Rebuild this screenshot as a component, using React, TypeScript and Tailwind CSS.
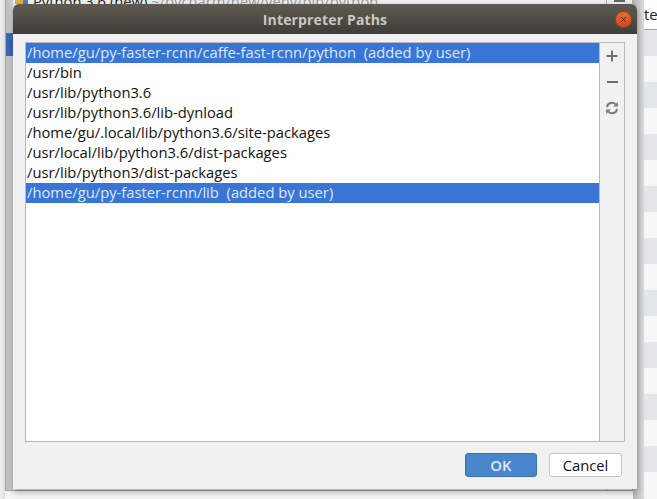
import React from 'react';
import { X } from 'lucide-react';

const PATHS = [
  { path: '/home/gu/py-faster-rcnn/caffe-fast-rcnn/python  (added by user)', selected: true },
  { path: '/usr/bin' },
  { path: '/usr/lib/python3.6' },
  { path: '/usr/lib/python3.6/lib-dynload' },
  { path: '/home/gu/.local/lib/python3.6/site-packages' },
  { path: '/usr/local/lib/python3.6/dist-packages' },
  { path: '/usr/lib/python3/dist-packages' },
  { path: '/home/gu/py-faster-rcnn/lib  (added by user)', selected: true },
];

const STRIPES = [0, 1, 2, 3, 4, 5, 6, 7, 8];

function RefreshIcon() {
  return (
    <svg width="14" height="14" viewBox="0 0 14 14" fill="none" stroke="#777" strokeWidth="2">
      <path d="M2 6.2A5 5 0 0 1 10.6 3.4" />
      <path d="M12 7.8A5 5 0 0 1 3.4 10.6" />
      <path d="M8.2 5.6h4.6V1z" fill="#777" stroke="none" />
      <path d="M5.8 8.4H1.2V13z" fill="#777" stroke="none" />
    </svg>
  );
}

function Backdrop() {
  return (
    <div className="flex h-[499px] bg-[#f5f5f5]">
      <div className="w-[5px] h-full bg-gradient-to-r from-[#f0f0f0] to-[#dedede]" />
      <div className="relative w-[628px] h-[491px] shrink-0 border-l border-b border-r border-[#a9a9a9] bg-[#eeeeee]">
        <div className="absolute left-0 top-0 w-[7px] h-full bg-gradient-to-r from-[#bdbdbd] to-[#d0d0d0]" />
        <div className="absolute left-0 top-[33px] w-[7px] h-[23px] bg-[#3a68b4]" />
        <div className="absolute left-[9px] top-0 w-[8px] h-[4px] bg-[#d9b23c]" />
        <div className="absolute left-[17px] top-0 w-[5px] h-[4px] bg-[#4a7fb0]" />
        <div className="absolute left-[27px] -top-[9px] text-[14.75px] leading-[20px] whitespace-nowrap text-[#222]">
          Python 3.6 (new) <span className="text-[#999]">~/pycharm/new/venv/bin/python</span>
        </div>
        <div className="absolute right-0 top-0 w-[26px] h-full border-l border-[#a9a9a9]" />
        <div className="absolute right-[7px] top-0 w-[11px] h-[2px] bg-[#666]" />
      </div>
      <div className="w-[11px] h-full bg-gradient-to-r from-[#b4b4b4] to-[#dcdcdc]" />
      <div className="flex-1 flex flex-col overflow-hidden">
        <div className="h-[30px] shrink-0 border-b border-[#9aa0a6] text-[15px] leading-[28px] whitespace-nowrap overflow-hidden text-[#222] bg-white">
          tes
        </div>
        {STRIPES.map((i) => (
          <div key={i} className="shrink-0">
            <div className="h-[26px] bg-[#e2e6ea]" />
            <div className="h-[26px] bg-[#f7f7f7]" />
          </div>
        ))}
      </div>
    </div>
  );
}

export default function App() {
  return (
    <div className="relative w-[657px] h-[499px] overflow-hidden font-['Open_Sans',sans-serif]">
      <Backdrop />

      <div className="absolute left-[13px] top-[4px] w-[624px] h-[485px] flex flex-col rounded-t-[6px] bg-[#f1f1f1] shadow-[0_3px_6px_rgba(0,0,0,0.3)]">
        <div className="relative h-[30px] shrink-0 flex items-center justify-center rounded-t-[6px] bg-gradient-to-b from-[#5f5b52] to-[#3f3d38]">
          <span className="text-[14px] font-bold text-[#cbc8c1] tracking-[0.15px]">Interpreter Paths</span>
          <div className="absolute right-[5px] top-[7px] w-[17px] h-[17px] rounded-full bg-gradient-to-b from-[#ea6a32] to-[#cf4719] border border-[#a93d18] flex items-center justify-center">
            <X size={9} strokeWidth={2} className="text-[#4a2010]" />
          </div>
        </div>

        <div className="flex-1 flex flex-col px-[12px] pt-[8px] pb-[12px]">
          <div className="flex-1 flex border border-[#b9b9b9]">
            <div className="flex-1 bg-white">
              {PATHS.map((p) => (
                <div
                  key={p.path}
                  className={`h-[20px] pl-[1px] text-[14.75px] leading-[18px] whitespace-pre ${p.selected ? 'bg-[#3875d7] text-[#dfe9f8]' : 'text-[#111]'}`}
                >
                  {p.path}
                </div>
              ))}
            </div>
            <div className="w-[25px] shrink-0 border-l border-[#b9b9b9] flex flex-col items-center">
              <div className="h-[26px] flex items-center justify-center">
                <svg width="12" height="12" viewBox="0 0 12 12" fill="#6e6e6e">
                  <path d="M5 0.5h2v4.5h4.5v2H7v4.5H5V7H0.5V5H5z" />
                </svg>
              </div>
              <div className="h-[26px] flex items-center justify-center">
                <div className="w-[11px] h-[2px] bg-[#6e6e6e]" />
              </div>
              <div className="h-[26px] flex items-center justify-center">
                <RefreshIcon />
              </div>
            </div>
          </div>
          <div className="flex justify-end gap-[12px] mt-[11px] pr-[3px]">
            <button className="w-[72px] h-[24px] rounded-[3px] bg-[#4a86cc] border border-[#3a70b4] text-[#dfe9f8] text-[15px] font-semibold leading-none">
              OK
            </button>
            <button className="w-[73px] h-[24px] rounded-[3px] bg-white border border-[#c4c4c4] text-[#111] text-[14.75px] leading-none">
              Cancel
            </button>
          </div>
        </div>
      </div>
    </div>
  );
}
